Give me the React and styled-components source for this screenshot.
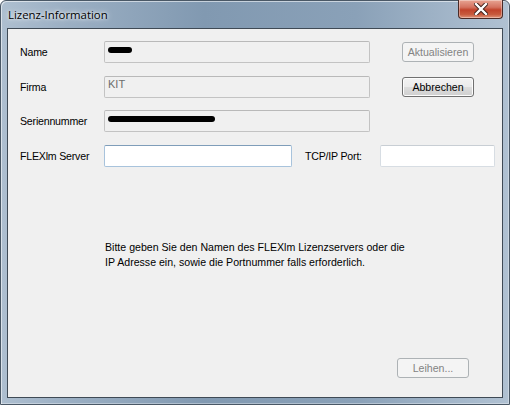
import React from 'react'
import styled, { createGlobalStyle } from 'styled-components'

const Global = createGlobalStyle`
  html, body { margin: 0; padding: 0; background: #fff; }
  body { font-family: "Liberation Sans", Arial, sans-serif; }
`

const Window = styled.div`
  width: 510px;
  height: 405px;
  box-sizing: border-box;
  display: flex;
  flex-direction: column;
  border: 1px solid #4a5866;
  border-radius: 6px 6px 0 0;
  background: linear-gradient(90deg, #aebfd0 0%, #9cb0c4 12%, #8199b1 40%, #8aa1b8 70%, #a4b7ca 90%, #b0c1d2 100%);
  box-shadow: inset 1px 1px 0 rgba(255,255,255,0.55), inset -1px -1px 0 rgba(255,255,255,0.35);
`

const TitleBar = styled.div`
  height: 27px;
  display: flex;
  align-items: flex-start;
  justify-content: space-between;
  padding-left: 7px;
`

const Title = styled.span`
  font-family: "Open Sans", "Noto Sans", sans-serif;
  font-size: 11.4px;
  color: #000;
  margin-top: 6px;
  text-shadow: 0 0 6px rgba(255,255,255,0.9), 0 0 3px rgba(255,255,255,0.9);
`

const CloseButton = styled.div`
  width: 45px;
  height: 19px;
  margin-right: 6px;
  margin-top: -1px;
  box-sizing: border-box;
  border: 1px solid #4a2a26;
  border-top: none;
  border-radius: 0 0 4px 4px;
  background: linear-gradient(180deg, #e8a493 0%, #d47260 40%, #c1432b 55%, #c75a3d 80%, #e0947a 100%);
  display: flex;
  align-items: center;
  justify-content: center;
  box-shadow: inset 0 0 0 1px rgba(255,255,255,0.35);
`

const Client = styled.div`
  flex: 1;
  margin: 0 6px 6px 6px;
  border: 1px solid #3f4a55;
  background: #f0f0f0;
  box-sizing: border-box;
  display: flex;
  flex-direction: column;
  padding: 12px 0 19px 12px;
  font-size: 10.6px;
  color: #000;
`

const Rows = styled.div`
  display: flex;
  flex-direction: column;
  gap: 12.5px;
`

const Row = styled.div`
  display: flex;
  align-items: center;
  height: 22px;
`

const Label = styled.span`
  width: ${p => p.$w}px;
  margin-left: ${p => p.$ml || 0}px;
  flex-shrink: 0;
  letter-spacing: -0.2px;
`

const Field = styled.div`
  width: ${p => p.$w}px;
  height: 22px;
  box-sizing: border-box;
  border: 1px solid ${p => (p.$edit ? (p.$focus ? '#a8c3dc' : '#d7dde3') : '#c3c3c3')};
  border-top-color: ${p => (p.$edit ? (p.$focus ? '#7f9db9' : '#c8ced4') : '#b9b9b9')};
  border-radius: 2px;
  background: ${p => (p.$edit ? '#fff' : '#f0f0f0')};
  color: #6d6d6d;
  display: flex;
  align-items: center;
  padding: 0 3px;
  flex-shrink: 0;
`

const FieldText = styled.span`
  margin-top: -6px;
  font-size: 11px;
`

const Redact = styled.span`
  display: inline-block;
  width: ${p => p.$w}px;
  height: 6px;
  background: #000;
  border-radius: 3px;
  margin-top: -5px;
`

const Button = styled.div`
  width: 72px;
  height: 20px;
  margin-left: ${p => p.$ml || 0}px;
  box-sizing: border-box;
  border: 1px solid ${p => (p.$disabled ? '#adb2b5' : '#707070')};
  border-radius: 3px;
  background: ${p =>
    p.$disabled
      ? '#f4f4f4'
      : 'linear-gradient(180deg, #f2f2f2 0%, #ebebeb 50%, #dddddd 51%, #cfcfcf 100%)'};
  box-shadow: inset 0 0 0 1px ${p => (p.$disabled ? '#f4f4f4' : '#fcfcfc')};
  color: ${p => (p.$disabled ? '#838383' : '#000')};
  display: flex;
  align-items: center;
  justify-content: center;
  flex-shrink: 0;
`

const Help = styled.p`
  margin: 73px 0 0 85px;
  line-height: 15px;
`

const Footer = styled.div`
  margin-top: auto;
  display: flex;
  justify-content: flex-end;
  padding-right: 33px;
`

export default function App() {
  return (
    <>
      <Global />
      <Window>
        <TitleBar>
          <Title>Lizenz-Information</Title>
          <CloseButton>
            <svg width="14" height="12" viewBox="0 0 14 12">
              <path d="M2 1 L12 11 M12 1 L2 11" stroke="#3b1d18" strokeWidth="4.2" strokeLinecap="square" />
              <path d="M2 1 L12 11 M12 1 L2 11" stroke="#ffffff" strokeWidth="2.4" strokeLinecap="square" />
            </svg>
          </CloseButton>
        </TitleBar>
        <Client>
          <Rows>
            <Row>
              <Label $w={84}>Name</Label>
              <Field $w={266}><Redact $w={24} /></Field>
              <Button $ml={32} $disabled>Aktualisieren</Button>
            </Row>
            <Row>
              <Label $w={84}>Firma</Label>
              <Field $w={266}><FieldText>KIT</FieldText></Field>
              <Button $ml={32}>Abbrechen</Button>
            </Row>
            <Row>
              <Label $w={84}>Seriennummer</Label>
              <Field $w={266}><Redact $w={107} /></Field>
            </Row>
            <Row>
              <Label $w={84}>FLEXlm Server</Label>
              <Field $w={188} $edit $focus />
              <Label $w={75} $ml={13}>TCP/IP Port:</Label>
              <Field $w={115} $edit />
            </Row>
          </Rows>
          <Help>
            Bitte geben Sie den Namen des FLEXlm Lizenzservers oder die<br />
            IP Adresse ein, sowie die Portnummer falls erforderlich.
          </Help>
          <Footer>
            <Button $disabled>Leihen...</Button>
          </Footer>
        </Client>
      </Window>
    </>
  )
}
